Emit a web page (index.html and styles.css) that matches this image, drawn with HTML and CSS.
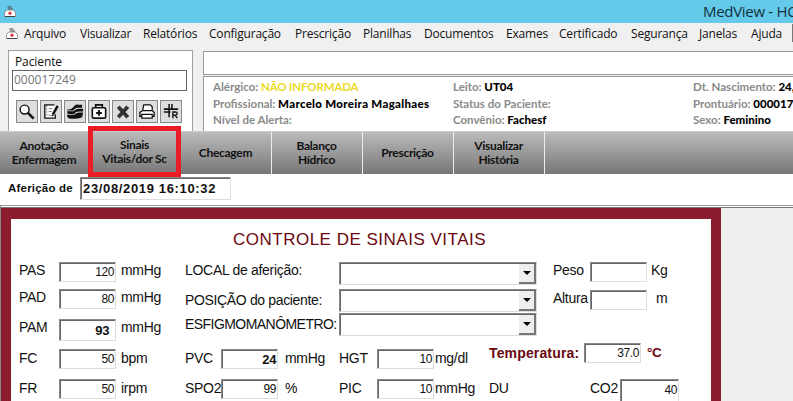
FILE: index.html
```html
<!DOCTYPE html>
<html lang="pt-BR">
<head>
<meta charset="utf-8">
<title>MedView</title>
<link rel="stylesheet" href="styles.css">
</head>
<body>
<svg width="0" height="0" class="defs"><defs>
<symbol id="kit" viewBox="0 0 12 11"><path d="M3.500 1h4M4 3h5" stroke="#444" fill="none"/><path d="M2.500 4h7l2 3v3.500h-11V7z" fill="#fff" stroke="#8d7f7d" stroke-width=".8"/><path d="M6 5.500v3.500M4.300 7.200h3.400" stroke="#e0303c" stroke-width="1.500"/><path d="M1 10.500h10" stroke="#444"/></symbol>
</defs></svg>
<header class="titlebar"><svg class="kit"><use href="#kit"/></svg><span>MedView - HC</span></header>
<nav class="menu"><svg class="kit"><use href="#kit"/></svg>
<span>Arquivo</span><span>Visualizar</span><span>Relatórios</span><span>Configuração</span><span>Prescrição</span><span>Planilhas</span><span>Documentos</span><span>Exames</span><span>Certificado</span><span>Segurança</span><span>Janelas</span><span>Ajuda</span><i></i></nav>
<section class="head">
<div class="patient">
<div class="plabel">Paciente</div>
<div class="pid">000017249</div>
<div class="tools">
<b><svg viewBox="0 0 21 22"><circle cx="8" cy="9" r="4.7" fill="#fff" stroke="#111" stroke-width="1.5"/><path d="M11.5 12.5l6 6" stroke="#111" stroke-width="2.8"/></svg></b>
<b><svg viewBox="0 0 21 22"><path d="M14 4H4v14h11v-4" fill="#fff" stroke="#111" stroke-width="1.4"/><path d="M6 5v12" stroke="#111" stroke-dasharray="1 2"/><path d="M8 8h4M8 11h3M8 15h4" stroke="#777"/><path d="M17.5 5l-5 9" stroke="#111" stroke-width="2.6"/><path d="M12 13.5l-.5 3 2-1.5z"/></svg></b>
<b><svg viewBox="0 0 21 22"><path d="M2 9q5 0 7-3t5-2h4v3h-4q-4 0-5 3H3zM2 10.800h7q2-2.800 5-2.800h5v3h-4q-4 0-5 2.500H3zM2 14.300h8q2-2.300 5-2.300h4l-1 5q-3 1.500-7 1.500H5q-3-1-3-4z" fill="#111"/></svg></b>
<b><svg viewBox="0 0 21 22"><path d="M7 7V4h7v3" fill="none" stroke="#111" stroke-width="1.7"/><rect x="3.5" y="7" width="14" height="11" rx="1.5" fill="#fff" stroke="#111" stroke-width="1.7"/><path d="M10.5 9.5v6M7.5 12.5h6" stroke="#111" stroke-width="2"/></svg></b>
<b><svg viewBox="0 0 21 22"><path d="M5.5 6l10 11M15.5 6l-10 11" stroke="#333" stroke-width="4"/></svg></b>
<b><svg viewBox="0 0 21 22"><path d="M6 10l1-6h7l2 2v4" fill="#fff" stroke="#111" stroke-width="1.3"/><path d="M3 16v-4l3-2h10l2 2v4z" fill="#fff" stroke="#111" stroke-width="1.4"/><path d="M5 14h11v4H5z" fill="#fff" stroke="#111" stroke-width="1.3"/></svg></b>
<b><svg viewBox="0 0 21 22"><path d="M3 8.500h15M3 11.500h7M8.500 3v14M11.500 3v6" fill="none" stroke="#111" stroke-width="1.6"/><path d="M12.500 18v-6.500h2.500q2 0 2 1.700t-2 1.700h-2.500m2.500 0l2 3" fill="none" stroke="#111" stroke-width="1.400"/></svg></b>
</div>
</div>
<div class="right">
<div class="blank"></div>
<div class="info">
<div><p>Alérgico: <em>NÃO INFORMADA</em></p><p>Profissional: <strong class="doc">Marcelo Moreira Magalhaes</strong></p><p>Nível de Alerta:</p></div>
<div><p>Leito: <strong>UT04</strong></p><p>Status do Paciente:</p><p>Convênio: <strong>Fachesf</strong></p></div>
<div><p>Dt. Nascimento: <strong>24,</strong></p><p>Prontuário: <strong>000017</strong></p><p>Sexo: <strong>Feminino</strong></p></div>
</div>
</div>
</section>
<nav class="tabs"><div>Anotação<br>Enfermagem</div><div class="active">Sinais<br>Vitais/dor Sc</div><div>Checagem</div><div>Balanço<br>Hídrico</div><div>Prescrição</div><div>Visualizar<br>História</div><div class="rest"></div></nav>
<section class="when"><span>Aferição de</span><div class="date">23/08/2019 16:10:32</div></section>
<main>
<div class="panel">
<h1>CONTROLE DE SINAIS VITAIS</h1>
<div class="form">
<div class="left">
<div class="row"><label>PAS</label><div class="f">120</div><span>mmHg</span></div>
<div class="row r2"><label>PAD</label><div class="f">80</div><span>mmHg</span></div>
<div class="row r3"><label>PAM</label><div class="f">93</div><span>mmHg</span></div>
<div class="row r4"><label>FC</label><div class="f">50</div><span>bpm</span></div>
<div class="row r5"><label>FR</label><div class="f">50</div><span>irpm</span></div>
</div>
<div class="body">
<div class="upper">
<div class="combos">
<div class="row"><label>LOCAL de aferição:</label><div class="combo"><i></i></div></div>
<div class="row k2"><label class="l2">POSIÇÃO do paciente:</label><div class="combo"><i></i></div></div>
<div class="row k3"><label class="l3">ESFIGMOMANÔMETRO:</label><div class="combo"><i></i></div></div>
</div>
<div class="size">
<div class="row"><label>Peso</label><div class="f"></div><span>Kg</span></div>
<div class="row s2"><label>Altura</label><div class="f"></div><span>m</span></div>
</div>
</div>
<div class="lower">
<div class="pv">
<div class="row r4"><label>PVC</label><div class="f bold">24</div><span>mmHg</span></div>
<div class="row r5"><label>SPO2</label><div class="f">99</div><span>%</span></div>
</div>
<div class="hg">
<div class="row r4"><label>HGT</label><div class="f">10</div><span>mg/dl</span></div>
<div class="row r5"><label>PIC</label><div class="f">10</div><span>mmHg</span></div>
</div>
<div class="te">
<div class="row temp"><label>Temperatura:</label><div class="f">37.0</div><span>°C</span></div>
<div class="row co"><label class="du">DU</label><label class="co2">CO2</label><div class="f">40</div></div>
</div>
</div>
</div>
</div>
</div>
</main>
</body>
</html>
```

FILE: styles.css
```css
* { box-sizing: border-box; }
body { margin: 0; width: 793px; height: 401px; overflow: hidden; background: #fff; font-family: "Liberation Sans", sans-serif; color: #111; white-space: nowrap; display: flex; flex-direction: column; }
body > * { flex: none; }
p, h1 { margin: 0; }
.defs { display: none; }
.kit { width: 12px; height: 11px; flex: none; }
.titlebar { height: 23px; background: #65c9e9; display: flex; align-items: center; padding-left: 4px; font: 15px "Open Sans", sans-serif; color: #10323d; }
.titlebar span { margin-left: 687px; letter-spacing: -.3px; height: 22px; line-height: 20px; }
.menu { height: 27px; background: #f0f0f0; display: grid; grid-template-columns: 18px 56px 63px 66px 86px 68px 61px 82px 53px 72px 68px 52px 41px 2px; padding: 0 0 7px 6px; align-items: center; font: 12px "Open Sans", sans-serif; color: #111; }
.menu i { width: 2px; height: 18px; background: #777; }
.menu span { letter-spacing: -.2px; }
.head { height: 81px; background: #f0f0f0; display: flex; padding-left: 8px; overflow: hidden; }
.patient { width: 185px; flex: none; border: 1px solid #a0a0a0; border-bottom: 0; background: #fff; padding: 3px 5px 0 3px; }
.plabel { font: 12px/16px "Open Sans", sans-serif; padding-left: 3px; letter-spacing: -.1px; }
.pid { height: 21px; border: 1px solid #666; font: 12px/18px "Open Sans", sans-serif; color: #777; padding-left: 1px; }
.tools { display: flex; gap: 2px; margin: 9px 0 0 4px; }
.tools b { width: 22px; height: 23px; border: 1px solid #888; background: #dedede; flex: none; }
.tools svg { width: 20px; height: 21px; display: block; }
.right { margin: 1px 0 0 10px; width: 590px; flex: none; }
.blank { height: 24px; background: #fff; border: 1px solid #999; border-right: 0; }
.info { margin-top: 1px; height: 55px; background: #fff; border: 1px solid #999; border-right: 0; border-bottom: 0; display: grid; grid-template-columns: 240px 240px 1fr; padding: 2px 0 0 9px; font: bold 11.5px/16.5px Lato, sans-serif; color: #8a8a8a; }
.info strong { color: #000; }
.info .doc { letter-spacing: .3px; }
.info em { color: #edda28; font-style: normal; letter-spacing: -.15px; }
.tabs { height: 43px; border-top: 1px solid #ccc; display: grid; grid-template-columns: 90px 91px 91px 91px 91px 91px 1fr; background: linear-gradient(#bbb, #777); font: bold 12px/14px Lato, sans-serif; letter-spacing: -.3px; color: #111; text-align: center; }
.tabs div { display: flex; align-items: center; justify-content: center; border-right: 1px solid #eee; padding-right: 1px; padding-bottom: 1px; }
.tabs .active { outline: 5px solid #ea1c26; position: relative; margin: -1px 5px 2px 3px; border: 0; padding: 0; }
.tabs .rest { border: 0; }
.when { height: 32px; display: flex; padding: 3px 0 0 8px; font: bold 11.5px/23px "Liberation Sans", sans-serif; border-bottom: 1px solid #999; }
.when span { width: 72px; letter-spacing: .2px; }
.date { width: 151px; height: 23px; border: 1px solid #ddd; border-top-color: #888; border-left-color: #888; box-shadow: inset 1px 1px #666; font-size: 13px; line-height: 21px; padding-left: 2px; letter-spacing: .65px; }
main { height: 195px; overflow: hidden; background: linear-gradient(#fff 1px, #777 1px, #777 2px, #efefef 2px); padding: 2px 0 0 1px; box-shadow: inset 1px 0 #888; }
.panel { width: 720px; height: 193px; overflow: hidden; border: 10px solid #8b1c30; border-top-width: 11px; border-bottom: 0; background: #fff; padding: 1px 0 0 8px; }
.panel h1 { height: 42px; font: 17px/39px "Liberation Sans", sans-serif; letter-spacing: .5px; color: #6b0810; padding-left: 214px; }
.form { display: flex; font-size: 14px; }
.row { display: flex; height: 19px; line-height: 17px; letter-spacing: -.3px; }
.left { width: 166px; }
.left label { width: 40px; }
.left span { margin-left: 5px; }
.f { width: 57px; height: 20px; border: 1px solid #ddd; border-top-color: #888; border-left-color: #888; box-shadow: inset 1px 1px #666; text-align: right; font-size: 12px; line-height: 19px; letter-spacing: -.4px; padding-right: 1px; flex: none; }
.r2 { margin-top: 8px; }
.r3 { margin-top: 11px; }
.r3 .f { height: 22px; line-height: 21px; font-size: 13px; font-weight: bold; padding-right: 6px; }
.left .r4, .r5 { margin-top: 11px; }
.r4 label, .r5 label, .co label { line-height: 18px; }
.r4 > span, .r5 > span { line-height: 18px; }
.upper { display: flex; height: 87px; }
.combos { width: 368px; }
.combos label { width: 154px; flex: none; }
.combo { width: 198px; height: 23px; border: 1px solid #ddd; border-top-color: #888; border-left-color: #888; box-shadow: inset 1px 1px #666; display: flex; justify-content: flex-end; flex: none; padding-top: 1px; }
.combo i { width: 17px; height: 20px; background: #eee; border-right: 2px solid #777; border-bottom: 2px solid #777; display: flex; align-items: center; justify-content: center; }
.combo i::after { content: ""; border: 4px solid transparent; border-top-color: #000; border-bottom: 0; }
.k2 { margin-top: 8px; }
.k3 { margin-top: 5px; }
.l2 { padding-top: 3px; letter-spacing: -.35px; }
.l3 { padding-top: 3px; letter-spacing: -.55px; }
.size label { width: 37px; }
.size span { margin-left: 4px; }
.s2 { margin-top: 9px; }
.s2 span { margin-left: 9px; }
.lower { display: flex; }
.pv { width: 154px; }
.pv label { width: 36px; }
.pv span { margin-left: 7px; }
.hg { width: 150px; }
.hg label { width: 38px; }
.hg span { margin-left: 1px; }
.bold { font-weight: bold; font-size: 13px; }
.temp { margin-top: -6px; }
.temp label { width: 95px; font-weight: bold; font-size: 14px; color: #6b0810; line-height: 20px; letter-spacing: .15px; }
.row.temp > span { color: #6b0810; margin-left: 6px; font-weight: bold; font-size: 13.5px; line-height: 20px; }
.co { margin-top: 17px; }
.du { width: 101px; }
.co2 { width: 30px; }
.co .f { width: 59px; height: 24px; line-height: 21px; }
```
